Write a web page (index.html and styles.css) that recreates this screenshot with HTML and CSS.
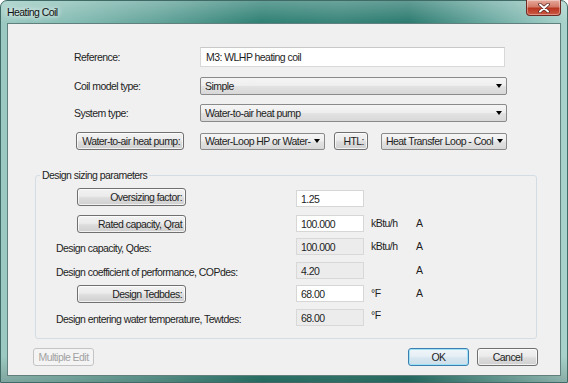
FILE: index.html
```html
<!DOCTYPE html>
<html lang="en">

<head>
    <meta charset="UTF-8">
    <meta name="viewport" content="width=device-width, initial-scale=1.0">
    <title>Heating Coil</title>
    <link rel="stylesheet" href="styles.css">
</head>

<body>
    <div class="window">
        <div class="titlebar">
            <span class="title">Heating Coil</span>
            <div class="close">
                <svg width="12" height="10" viewBox="0 0 12 10">
                    <path d="M2 1.5 L10 8.5 M10 1.5 L2 8.5" stroke="#5a2a22" stroke-width="3.6" stroke-linecap="round" />
                    <path d="M2 1.5 L10 8.5 M10 1.5 L2 8.5" stroke="#ffffff" stroke-width="2" stroke-linecap="round" />
                </svg>
            </div>
        </div>

        <div class="client">
            <div class="top-form">
                <span class="label">Reference:</span>
                <div class="textbox">M3: WLHP heating coil</div>

                <span class="label">Coil model type:</span>
                <div class="combo">Simple</div>

                <span class="label">System type:</span>
                <div class="combo">Water-to-air heat pump</div>

                <div class="btn wide-btn">Water-to-air heat pump:</div>
                <div class="split">
                    <div class="combo loop">Water-Loop HP or Water-</div>
                    <div class="btn htl">HTL:</div>
                    <div class="combo htl-combo">Heat Transfer Loop - Cool</div>
                </div>
            </div>

            <fieldset class="group">
                <legend>Design sizing parameters</legend>
                <div class="params">
                    <div class="btn pbtn">Oversizing factor:</div>
                    <div class="field first">1.25</div>
                    <span></span>
                    <span></span>

                    <div class="btn pbtn">Rated capacity, Qrat</div>
                    <div class="field">100.000</div>
                    <span class="unit">kBtu/h</span>
                    <span class="unit">A</span>

                    <span class="plabel">Design capacity, Qdes:</span>
                    <div class="field off">100.000</div>
                    <span class="unit">kBtu/h</span>
                    <span class="unit">A</span>

                    <span class="plabel">Design coefficient of performance, COPdes:</span>
                    <div class="field off">4.20</div>
                    <span></span>
                    <span class="unit">A</span>

                    <div class="btn pbtn">Design Tedbdes:</div>
                    <div class="field">68.00</div>
                    <span class="unit">&deg;F</span>
                    <span class="unit">A</span>

                    <span class="plabel">Design entering water temperature, Tewtdes:</span>
                    <div class="field off">68.00</div>
                    <span class="unit raised">&deg;F</span>
                    <span></span>
                </div>
            </fieldset>

            <div class="footer">
                <div class="btn footbtn disabled">Multiple Edit</div>
                <div class="spacer"></div>
                <div class="btn footbtn default">OK</div>
                <div class="btn footbtn">Cancel</div>
            </div>
        </div>
    </div>
</body>

</html>
```

FILE: styles.css
```css
* {
    box-sizing: border-box;
}

body {
    margin: 0;
    background: #ffffff;
    font-family: "Liberation Sans", Arial, sans-serif;
    font-size: 10.5px;
    letter-spacing: -0.55px;
    color: #1e1e1e;
}

/* window frame */
.window {
    width: 568px;
    height: 383px;
    padding: 0 6px 6px;
    border: 1px solid #3f6a65;
    border-radius: 7px 7px 0 0;
    display: flex;
    flex-direction: column;
    background:
        linear-gradient(180deg, rgba(255, 255, 255, 0.25) 0, rgba(255, 255, 255, 0) 22px, rgba(0, 0, 0, 0) 355px, rgba(0, 0, 0, 0.18) 100%),
        linear-gradient(90deg, #9ccac2 0%, #86bdb4 12%, #62a399 28%, #2f8074 46%, #388479 60%, #2c7b70 72%, #6aa9a0 86%, #a9d3cc 100%);
}

.titlebar {
    height: 22px;
    display: flex;
    justify-content: space-between;
    align-items: flex-start;
}

.title {
    padding-top: 5px;
    color: #111;
    text-shadow: 0 0 4px #eaf5f3, 0 0 7px #eaf5f3;
}

.close {
    width: 35px;
    height: 16px;
    margin-top: -1px;
    border: 1px solid #6e2a22;
    border-top: none;
    border-radius: 0 0 4px 4px;
    background: linear-gradient(#e7aa9b, #d27a68 45%, #b9361f 55%, #cc5a44);
    display: flex;
    align-items: center;
    justify-content: center;
    box-shadow: inset 0 0 0 1px rgba(255, 255, 255, 0.35);
}

.client {
    flex: 1;
    background: #f0f0f0;
    border: 1px solid #5f807c;
    display: flex;
    flex-direction: column;
}

/* top section */
.top-form {
    display: grid;
    grid-template-columns: 126px 307px;
    grid-template-rows: 20px 18px 18px 19px;
    row-gap: 9.5px;
    margin: 23px 0 0 66px;
    align-items: center;
}

.textbox {
    height: 20px;
    width: 305px;
    border: 1px solid #d8d8d8;
    border-top-color: #c8c8c8;
    background: #fff;
    padding: 0 5px;
    display: flex;
    align-items: center;
}

.combo {
    height: 18px;
    border: 1px solid #8a8a8a;
    border-radius: 2px;
    background: linear-gradient(#f5f5f5 0, #eeeeee 48%, #e2e2e2 52%, #d8d8d8 100%);
    display: flex;
    align-items: center;
    justify-content: space-between;
    padding: 0 4px 0 4px;
    white-space: nowrap;
    overflow: hidden;
}

.combo::after {
    content: "";
    flex: none;
    margin-left: 4px;
    border-left: 3.5px solid transparent;
    border-right: 3.5px solid transparent;
    border-top: 4px solid #000;
}

.btn {
    height: 18px;
    border: 1px solid #707070;
    border-radius: 3px;
    background: linear-gradient(#f2f2f2 0, #ebebeb 45%, #dddddd 55%, #cfcfcf 100%);
    box-shadow: inset 0 0 0 1px rgba(255, 255, 255, 0.7);
    display: flex;
    align-items: center;
    justify-content: flex-end;
    padding: 0 3px;
    white-space: nowrap;
    overflow: hidden;
}

.wide-btn {
    width: 108px;
    margin-left: 2px;
}

.split {
    display: flex;
    align-items: center;
}

.loop {
    width: 125px;
    height: 17px;
}

.htl {
    width: 34px;
    margin-left: 9px;
}

.htl-combo {
    width: 126px;
    height: 17px;
    margin-left: 13px;
}

/* design sizing group */
.group {
    margin: 18.5px 0 0 27px;
    width: 502px;
    border: 1px solid #d3dde3;
    border-radius: 3px;
    padding: 7px 0 11px 0;
}

.group legend {
    margin-left: 4px;
    padding: 0 2px;
    line-height: 12px;
}

.params {
    display: grid;
    grid-template-columns: 240px 75px 45px auto;
    grid-template-rows: 27px 23px 24px 23px 24px 18px;
    padding-left: 20px;
    align-items: start;
}

.pbtn {
    width: 109px;
    margin-left: 21px;
}

.field {
    height: 17px;
    width: 68px;
    border: 1px solid #d6d6d6;
    background: #fff;
    padding: 0 4px;
    display: flex;
    align-items: center;
}

.field.first {
    margin-top: 2px;
}

.field.off {
    background: #ececec;
    border-color: #d8d8d8;
}

.plabel {
    line-height: 17px;
    padding-top: 2px;
}

.unit {
    line-height: 17px;
}

.unit.raised {
    margin-top: -2px;
}

/* footer buttons */
.footer {
    display: flex;
    margin-top: 9px;
    padding: 0 22px 0 25px;
    gap: 8px;
}

.spacer {
    flex: 1;
}

.footbtn {
    width: 61px;
    justify-content: center;
}

.footbtn.disabled {
    color: #a2a2a2;
    border-color: #c4c4c4;
    background: #f4f4f4;
    box-shadow: none;
}

.footbtn.default {
    border-color: #3c7fb1;
    background: linear-gradient(#f0f6fa 0, #e6eff5 45%, #d7e6f0 55%, #cddfea 100%);
    box-shadow: inset 0 0 0 1px #9fe2f6;
}
```
